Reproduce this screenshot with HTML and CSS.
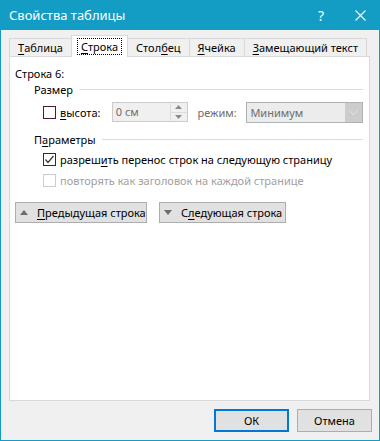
FILE: index.html
```html
<!DOCTYPE html>
<html lang="ru">
<head>
    <meta charset="UTF-8">
    <title>Свойства таблицы</title>
    <link rel="stylesheet" href="styles.css">
</head>
<body>
    <div class="dialog">
        <!-- Title bar -->
        <div class="titlebar">
            <span class="title">Свойства таблицы</span>
            <span class="help">?</span>
            <span class="close">
                <svg width="11" height="11" viewBox="0 0 11 11"><path d="M0.5 0.5 L10.5 10.5 M10.5 0.5 L0.5 10.5" stroke="#fff" stroke-width="1.1" fill="none"/></svg>
            </span>
        </div>

        <div class="content">
            <!-- Tabs -->
            <div class="tabs">
                <div class="tab"><u>Т</u>аблица</div>
                <div class="tab active"><span class="focus"><u>С</u>трока</span></div>
                <div class="tab">Стол<u>б</u>ец</div>
                <div class="tab"><u>Я</u>чейка</div>
                <div class="tab"><u>З</u>амещающий текст</div>
            </div>

            <!-- Tab page -->
            <div class="panel">
                <div class="row-name">Строка 6:</div>

                <div class="group"><span>Размер</span></div>
                <div class="size-row">
                    <div class="check-item"><span class="box"></span><u>в</u>ысота:</div>
                    <div class="spin">
                        <span class="field-value">0 см</span>
                        <span class="spin-btns">
                            <span class="spin-btn"><svg width="7" height="4" viewBox="0 0 7 4"><path d="M0 4 L3.5 0 L7 4 Z" fill="#8a8a8a"/></svg></span>
                            <span class="spin-btn"><svg width="7" height="4" viewBox="0 0 7 4"><path d="M0 0 L3.5 4 L7 0 Z" fill="#8a8a8a"/></svg></span>
                        </span>
                    </div>
                    <span class="mode-label">режим:</span>
                    <div class="combo">
                        <span class="field-value">Минимум</span>
                        <span class="combo-btn"><svg width="9" height="5" viewBox="0 0 9 5"><path d="M0.5 0.5 L4.5 4.5 L8.5 0.5" stroke="#e6e6e6" stroke-width="1" fill="none"/></svg></span>
                    </div>
                </div>

                <div class="group params"><span>П<u>а</u>раметры</span></div>
                <div class="check-row">
                    <span class="box"><svg width="11" height="11" viewBox="0 0 11 11"><path d="M1.5 5.5 L4 8.5 L9.5 2" stroke="#333" stroke-width="1.2" fill="none"/></svg></span>
                    разреш<u>и</u>ть перенос строк на следующую страницу
                </div>
                <div class="check-row disabled">
                    <span class="box"></span>
                    повторять как заголовок на каждой странице
                </div>

                <div class="nav-buttons">
                    <button class="btn nav-btn prev"><svg width="8" height="5" viewBox="0 0 8 5"><path d="M0 5 L4 0 L8 5 Z" fill="#6d6d6d"/></svg><span><u>П</u>редыдущая строка</span></button>
                    <button class="btn nav-btn next"><svg width="8" height="5" viewBox="0 0 8 5"><path d="M0 0 L4 5 L8 0 Z" fill="#6d6d6d"/></svg><span>С<u>л</u>едующая строка</span></button>
                </div>
            </div>

            <!-- Dialog buttons -->
            <div class="footer">
                <button class="btn default">ОК</button>
                <button class="btn">Отмена</button>
            </div>
        </div>
    </div>
</body>
</html>
```

FILE: styles.css
```css
/* Windows 10 style dialog */
body {
    margin: 0;
    padding: 0;
    font-family: 'Noto Sans', 'Open Sans', sans-serif;
    font-size: 11px;
    color: #000;
    background: #fff;
}

u {
    text-decoration: underline;
    text-underline-offset: 2px;
}

.dialog {
    width: 380px;
    height: 441px;
    box-sizing: border-box;
    border: 1px solid #139dc4;
    border-top: none;
    display: flex;
    flex-direction: column;
    background: #f0f0f0;
}

/* Title bar */
.titlebar {
    height: 30px;
    margin: 0 -1px;
    background: #139dc4;
    color: #fff;
    display: flex;
    align-items: center;
    padding-left: 9px;
}

.title {
    flex: 1;
    font-size: 13px;
}

.help {
    font-size: 14px;
    margin-right: 31px;
}

.close {
    display: flex;
    margin-right: 14px;
}

.content {
    flex: 1;
    display: flex;
    flex-direction: column;
    padding: 5px 9px 0 8px;
}

/* Tabs */
.tabs {
    display: flex;
    align-items: flex-end;
    height: 21px;
    position: relative;
    z-index: 1;
}

.tab {
    height: 18px;
    box-sizing: border-box;
    padding: 0 8px;
    border: 1px solid #d9d9d9;
    border-bottom: none;
    margin-right: -1px;
    background: #f0f0f0;
    display: flex;
    align-items: center;
    line-height: 14px;
}

.tab.active {
    height: 22px;
    margin-bottom: -1px;
    background: #fff;
    padding: 0 6px;
}

.focus {
    outline: 1px dotted #000;
    padding: 0 3px;
    line-height: 15px;
}

/* Tab page */
.panel {
    height: 345px;
    box-sizing: border-box;
    background: #fff;
    border: 1px solid #d9d9d9;
    padding: 9px 6px 0 5px;
}

.row-name {
    line-height: 15px;
}

.group {
    display: flex;
    align-items: center;
    margin: 1px 0 0 19px;
    line-height: 15px;
}

.group.params {
    margin-top: 10px;
}

.group::after {
    content: '';
    flex: 1;
    height: 1px;
    background: #dcdcdc;
    margin-left: 6px;
}

.size-row {
    display: flex;
    align-items: center;
    height: 20px;
    margin: 5px 0 0 28px;
}

.check-item {
    display: flex;
    align-items: center;
    width: 69px;
}

.box {
    width: 13px;
    height: 13px;
    box-sizing: border-box;
    border: 1px solid #4a1838;
    background: #fff;
    margin-right: 4px;
    display: flex;
    align-items: center;
    justify-content: center;
    flex-shrink: 0;
}

.spin {
    width: 76px;
    height: 20px;
    box-sizing: border-box;
    border: 1px solid #cccccc;
    background: #f0f0f0;
    display: flex;
}

.field-value {
    flex: 1;
    color: #6d6d6d;
    padding-left: 3px;
    line-height: 18px;
}

.spin-btns {
    width: 16px;
    display: flex;
    flex-direction: column;
    border-left: 1px solid #dcdcdc;
}

.spin-btn {
    flex: 1;
    display: flex;
    align-items: center;
    justify-content: center;
}

.spin-btn + .spin-btn {
    border-top: 1px solid #dcdcdc;
}

.mode-label {
    color: #6d6d6d;
    margin-left: 10px;
    width: 49px;
}

.combo {
    width: 117px;
    height: 21px;
    box-sizing: border-box;
    border: 1px solid #adb2b5;
    background: #ececec;
    display: flex;
}

.combo .field-value {
    line-height: 19px;
}

.combo-btn {
    width: 17px;
    background: #cccccc;
    display: flex;
    align-items: center;
    justify-content: center;
}

.check-row {
    display: flex;
    align-items: center;
    height: 21px;
    margin-left: 28px;
}

.group + .check-row {
    margin-top: 2px;
}

.check-row.disabled {
    color: #a0a0a0;
}

.check-row.disabled .box {
    border-color: #cccccc;
}

/* Buttons */
.btn {
    font-family: inherit;
    font-size: 11px;
    color: #000;
    background: #e1e1e1;
    border: 1px solid #adadad;
    height: 23px;
    padding: 0;
    margin: 0;
    box-sizing: border-box;
}

.nav-buttons {
    display: flex;
    gap: 12px;
    margin-top: 11px;
}

.nav-btn {
    height: 21px;
    display: flex;
    align-items: center;
    padding: 0 0 0 4px;
}

.nav-btn.prev {
    width: 132px;
}

.nav-btn.next {
    width: 127px;
}

.nav-btn svg {
    margin-right: 9px;
}

.footer {
    display: flex;
    justify-content: flex-end;
    gap: 8px;
    padding: 8px 0 0;
    margin-right: -2px;
}

.footer .btn {
    width: 75px;
}

.btn.default {
    border: 2px solid #0078d7;
}
```
